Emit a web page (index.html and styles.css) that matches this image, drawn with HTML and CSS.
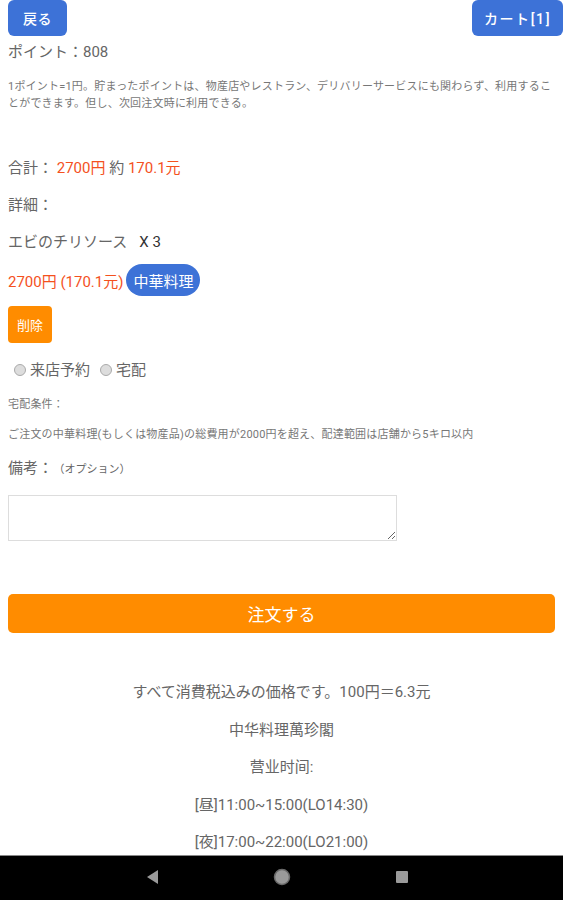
FILE: index.html
```html
<!DOCTYPE html>
<html lang="ja">
<head>
<meta charset="utf-8">
<link rel="stylesheet" href="styles.css">
</head>
<body>
<div class="header">
  <button class="btn-blue back">戻る</button>
  <button class="btn-blue cart">カート[1]</button>
</div>
<div class="points">ポイント：808</div>
<p class="note">1ポイント=1円。貯まったポイントは、物産店やレストラン、デリバリーサービスにも関わらず、利用することができます。但し、次回注文時に利用できる。</p>
<div class="line total">合計：&nbsp;<span class="red">2700円</span> 約 <span class="red">170.1元</span></div>
<div class="line detail">詳細：</div>
<div class="line item">エビのチリソース<span class="qty">X 3</span></div>
<div class="price-row"><span class="red">2700円 (170.1元)</span><span class="badge">中華料理</span></div>
<button class="btn-delete">削除</button>
<div class="radios">
  <label class="radio"><span class="dot"></span>来店予約</label>
  <label class="radio"><span class="dot"></span>宅配</label>
</div>
<div class="small cond">宅配条件：</div>
<div class="small cond2">ご注文の中華料理(もしくは物産品)の総費用が2000円を超え、配達範囲は店舗から5キロ以内</div>
<div class="line memo">備考：<span class="opt">（オプション）</span></div>
<textarea class="memo-box"></textarea>
<button class="btn-order">注文する</button>
<div class="footer">
  <div class="f-line first">すべて消費税込みの価格です。100円＝6.3元</div>
  <div class="f-line">中华料理萬珍閣</div>
  <div class="f-line">营业时间:</div>
  <div class="f-line">[昼]11:00~15:00(LO14:30)</div>
  <div class="f-line">[夜]17:00~22:00(LO21:00)</div>
</div>
<div class="navbar">
  <svg class="nav-back" width="12" height="14" viewBox="0 0 12 14"><polygon points="11,0 11,14 0,7" fill="#9a9a9a"/></svg>
  <svg class="nav-home" width="18" height="18" viewBox="0 0 18 18"><circle cx="9" cy="9" r="7.5" fill="#9a9a9a" stroke="#6a6a6a" stroke-width="1.5"/></svg>
  <svg class="nav-recent" width="12" height="12" viewBox="0 0 12 12"><rect x="0" y="0" width="12" height="12" rx="1" fill="#9a9a9a"/></svg>
</div>
</body>
</html>
```
FILE: styles.css
```css
* { box-sizing: border-box; }
html, body { margin: 0; padding: 0; background: #fff; }
body {
  padding: 0 8px;
  font-family: Roboto, "Noto Sans CJK JP", sans-serif;
  color: #666;
  font-size: 15px;
  height: 900px;
  overflow: hidden;
}
.header {
  display: flex;
  justify-content: space-between;
  margin-right: -8px;
  height: 36px;
}
.btn-blue {
  border: none;
  background: #3d72d7;
  color: #fff;
  font-family: inherit;
  font-size: 14px;
  font-weight: 500;
  height: 36px;
  border-radius: 6px;
  padding: 0;
  letter-spacing: 0.5px;
}
.back { width: 59px; }
.cart { width: 91px; letter-spacing: 1.6px; }
.points { margin-top: 6px; line-height: 20px; font-size: 15px; }
.note {
  margin: 16px 0 0;
  font-size: 11px;
  letter-spacing: 0.2px;
  line-height: 17px;
  color: #777;
}
.line { line-height: 20px; font-size: 15px; }
.total { margin-top: 46px; }
.detail { margin-top: 17px; }
.item { margin-top: 17px; }
.qty { color: #333; margin-left: 12px; }
.red { color: #f4511e; }
.price-row {
  margin-top: 12px;
  height: 32px;
  display: flex;
  align-items: center;
}
.badge {
  margin-left: 3px;
  width: 74px;
  height: 32px;
  border-radius: 16px;
  background: #3d72d7;
  color: #fff;
  display: flex;
  align-items: center;
  justify-content: center;
  font-size: 15px;
}
.btn-delete {
  display: block;
  margin-top: 10px;
  width: 44px;
  height: 37px;
  border: none;
  border-radius: 4px;
  background: #ff8c00;
  color: #fff;
  font-family: inherit;
  font-size: 13px;
  padding: 0;
}
.radios {
  margin-top: 17px;
  display: flex;
  gap: 10px;
  padding-left: 6px;
  line-height: 20px;
  font-size: 15px;
}
.radio { display: flex; align-items: center; }
.dot {
  width: 12px;
  height: 12px;
  border-radius: 50%;
  border: 1px solid #aaa;
  background: #ddd;
  margin-right: 4px;
}
.small { font-size: 11px; letter-spacing: 0.2px; line-height: 16px; color: #777; }
.cond { margin-top: 17px; }
.cond2 { margin-top: 14px; }
.memo { margin-top: 15px; }
.opt { font-size: 11px; margin-left: 6px; }
.memo-box {
  display: block;
  margin: 15px 0 0;
  width: 389px;
  height: 46px;
  border: 1px solid #ddd;
  resize: vertical;
}
.btn-order {
  display: block;
  margin-top: 53px;
  width: 100%;
  height: 39px;
  border: none;
  border-radius: 5px;
  background: #ff8c00;
  color: #fff;
  font-family: inherit;
  font-size: 17px;
  padding: 0;
}
.footer { text-align: center; margin-top: 49px; color: #666; }
.f-line { line-height: 20px; margin-top: 17.5px; }
.f-line.first { margin-top: 0; }
.navbar {
  position: fixed;
  left: 0; right: 0; bottom: 0;
  height: 45px;
  background: #000;
  border-top: 1px solid #888;
}
.navbar svg { position: absolute; }
.nav-back { left: 147px; top: 14px; }
.nav-home { left: 273px; top: 12px; }
.nav-recent { left: 396px; top: 15px; }
```
